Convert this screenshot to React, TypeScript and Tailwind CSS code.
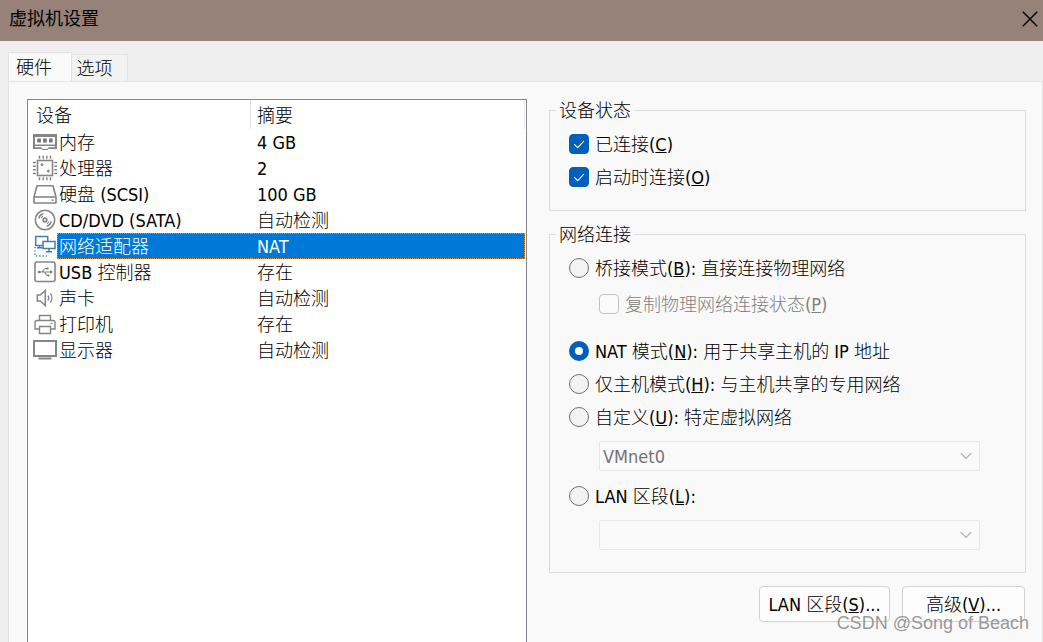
import type { ReactNode } from 'react';

const MemoryIcon = () => (
  <>
    <path d="M1 6h22v13h-7l-1.500 2h-5L8 19H1z" fill="#858585" stroke="none" />
    <path d="M2 8h20v7.500H2zM2 17h20v1.500h-6.500L14 20h-4l-1.500-1.500H2z" fill="white" stroke="none" />
    <path d="M0 5h24v2H0zM0 5h1.800v14.500H0zM22.200 5H24v14.500h-1.800zM0 18.500h8.500v1.500H0zM15.500 18.500H24v1.500h-8.500z" fill="#858585" stroke="none" />
    <path d="M4.200 9.500h3.700v4H4.200zM10.100 9.500h3.700v4h-3.700zM16 9.500h3.700v4H16z" fill="#777" stroke="none" />
  </>
);

const CpuIcon = () => (
  <>
    <rect x="4.500" y="5.500" width="15" height="15" strokeWidth="1.600" />
    <path
      d="M6.500 .8v3M10.200 .8v3M13.800 .8v3M17.500 .8v3M6.500 22.200v3M10.200 22.200v3M13.800 22.200v3M17.500 22.200v3M0 7.500h2.800M0 11.200h2.800M0 14.800h2.800M0 18.500h2.800M21.200 7.500H24M21.200 11.200H24M21.200 14.800H24M21.200 18.500H24"
      strokeWidth="1.500"
    />
    <circle cx="9" cy="9.700" r="1" fill="#858585" />
    <circle cx="15.300" cy="16" r="1" fill="#858585" />
  </>
);

const DiskIcon = () => (
  <>
    <path d="M4 4.800h16l3 11.200v6H1v-6z" strokeWidth="1.600" strokeLinejoin="round" />
    <path d="M1 16h22" strokeWidth="1.600" />
    <path d="M18.500 19.200h2" strokeWidth="1.500" />
  </>
);

const DiscIcon = () => (
  <>
    <circle cx="12" cy="13" r="9.700" strokeWidth="1.600" />
    <circle cx="12" cy="13" r="1.800" strokeWidth="1.700" />
    <path d="M5.800 11.500a6.300 6.300 0 0 1 4.500-4.700M18.200 14.500a6.300 6.300 0 0 1-4.500 4.700" strokeWidth="1.400" />
    <path d="M8.300 11a4.200 4.200 0 0 1 1.700-1.700M15.700 15a4.200 4.200 0 0 1-1.700 1.700" strokeWidth="1.100" />
  </>
);

const NetworkIcon = () => (
  <g stroke="#3f7fae">
    <path d="M10 12.500H2.700v-9h12V8M6.500 12.500v2M4 14.700h5" strokeWidth="1.500" />
    <path d="M10 8.500h12v7H10zM16 15.500v3M13 18.700h6" strokeWidth="1.500" />
    <path d="M2 14v9h12" strokeWidth="1.300" strokeDasharray="1.300 2" />
  </g>
);

const UsbIcon = () => (
  <>
    <rect x="2" y="3" width="20" height="19.500" rx="2" strokeWidth="1.600" />
    <path d="M6 13h12M8.500 13c2 0 2-3.500 4-3.500h2M11 13c1.500 0 1.500 3.500 3.500 3.500h1" strokeWidth="1.100" />
    <circle cx="6.200" cy="13" r="1.300" fill="#777" stroke="none" />
    <path d="M17 11.200l3 1.800-3 1.800z" fill="#777" stroke="none" />
    <rect x="13.500" y="8.500" width="2" height="2" fill="#777" stroke="none" />
    <circle cx="15.500" cy="16.500" r="1.100" fill="#777" stroke="none" />
  </>
);

const SpeakerIcon = () => (
  <>
    <path d="M4.300 10h3l5-4.500v15l-5-4.500h-3z" strokeWidth="1.500" />
    <path d="M14.800 10.500a4 4 0 0 1 0 5M17.300 8.500a7 7 0 0 1 0 9" strokeWidth="1.300" />
  </>
);

const PrinterIcon = () => (
  <>
    <path d="M6.500 9.500v-5h11v5M6 18H2v-6.500q0-2 2-2h16q2 0 2 2V18h-4" strokeWidth="1.400" />
    <path d="M6.500 15.500h11v7h-11z" strokeWidth="1.400" />
    <path d="M17.500 12.500h2" strokeWidth="1.300" />
  </>
);

const DisplayIcon = () => (
  <>
    <rect x="1" y="4" width="22" height="15" strokeWidth="2" />
    <path d="M5.500 21.500h13" strokeWidth="2" />
  </>
);

const devices: { name: string; summary: string; icon: ReactNode; selected?: boolean }[] = [
  { name: '内存', summary: '4 GB', icon: <MemoryIcon /> },
  { name: '处理器', summary: '2', icon: <CpuIcon /> },
  { name: '硬盘 (SCSI)', summary: '100 GB', icon: <DiskIcon /> },
  { name: 'CD/DVD (SATA)', summary: '自动检测', icon: <DiscIcon /> },
  { name: '网络适配器', summary: 'NAT', icon: <NetworkIcon />, selected: true },
  { name: 'USB 控制器', summary: '存在', icon: <UsbIcon /> },
  { name: '声卡', summary: '自动检测', icon: <SpeakerIcon /> },
  { name: '打印机', summary: '存在', icon: <PrinterIcon /> },
  { name: '显示器', summary: '自动检测', icon: <DisplayIcon /> },
];

function DeviceTable() {
  return (
    <table className="w-full table-fixed border-separate border-spacing-0 text-left">
      <colgroup>
        <col className="w-[29px]" />
        <col className="w-[194px]" />
        <col />
      </colgroup>
      <thead>
        <tr className="h-[29px]">
          <th colSpan={2} className="border-r border-[#e5e5e5] p-0 pt-0.5 pl-2 font-light">设备</th>
          <th className="border-r border-[#e5e5e5] p-0 pt-0.5 pl-1.5 font-light">摘要</th>
        </tr>
      </thead>
      <tbody>
        {devices.map((d) => (
          <tr key={d.name} className="h-[26px]">
            <td className="p-0 pl-[5px]">
              <svg viewBox="0 0 24 26" className="block h-[26px] w-6" fill="none" stroke="#858585" aria-hidden="true">
                {d.icon}
              </svg>
            </td>
            <td
              className={
                d.selected
                  ? 'border-y border-l border-dotted border-[#e58a2c] bg-[#0078d7] p-0 pt-px pl-px leading-[22px] text-white'
                  : 'p-0 pt-0.5 pl-0.5'
              }
            >
              {d.name}
            </td>
            <td
              className={
                d.selected
                  ? 'border-y border-r border-dotted border-[#e58a2c] bg-[#0078d7] p-0 pt-px pl-1.5 leading-[22px] text-white'
                  : 'p-0 pt-0.5 pl-1.5'
              }
            >
              {d.summary}
            </td>
          </tr>
        ))}
      </tbody>
    </table>
  );
}

function Check({ children, checked, disabled }: { children: ReactNode; checked?: boolean; disabled?: boolean }) {
  return (
    <label className={disabled ? 'flex h-[33px] items-center gap-1.5 text-[#808080]' : 'flex h-[33px] items-center gap-1.5'}>
      <span className="grid shrink-0 place-items-center">
        <input
          type="checkbox"
          defaultChecked={checked}
          disabled={disabled}
          className="peer col-start-1 row-start-1 size-5 appearance-none rounded border border-[#868686] bg-[#f5f5f5] checked:border-[#005fb8] checked:bg-[#005fb8] disabled:border-[#c3c3c3] disabled:bg-[#fbfbfb]"
        />
        <svg
          viewBox="0 0 20 20"
          className="pointer-events-none invisible col-start-1 row-start-1 size-5 peer-checked:visible"
          fill="none"
          stroke="white"
          strokeWidth="1.1"
          aria-hidden="true"
        >
          <path d="M5.200 10.200l3.500 3.400 6.200-6.400" />
        </svg>
      </span>
      <span className="pt-0.5">{children}</span>
    </label>
  );
}

function Radio({ children, checked }: { children: ReactNode; checked?: boolean }) {
  return (
    <label className="flex h-[33px] items-center gap-1.5">
      <input
        type="radio"
        name="connection"
        defaultChecked={checked}
        className="size-5 shrink-0 appearance-none rounded-full border border-[#707070] bg-[#f3f3f3] checked:border-6 checked:border-[#005fb8] checked:bg-white"
      />
      <span className="pt-0.5">{children}</span>
    </label>
  );
}

function Combo({ label, value }: { label: string; value: string }) {
  return (
    <div className="mr-[45px] ml-[30px] grid items-center">
      <select
        aria-label={label}
        disabled
        defaultValue={value}
        className="col-start-1 row-start-1 h-[30px] w-full appearance-none rounded-xs border border-[#e8e8e8] bg-[#fafafa] px-[3px] pt-0.5 text-[#737373] opacity-100"
      >
        <option value={value}>{value}</option>
      </select>
      <svg
        viewBox="0 0 12 8"
        className="pointer-events-none col-start-1 row-start-1 mr-2 h-2 w-3 justify-self-end"
        fill="none"
        stroke="#adadad"
        strokeWidth="1.2"
        aria-hidden="true"
      >
        <path d="M.7 1.200L6 6.500l5.300-5.300" />
      </svg>
    </div>
  );
}

function Group({ title, children, className }: { title: string; children: ReactNode; className: string }) {
  return (
    <fieldset className={className}>
      <legend className="-ml-[13px] h-[22px] px-[3px]">{title}</legend>
      {children}
    </fieldset>
  );
}

const buttonClass = 'h-9 rounded border border-[#d0d0d0] bg-[#fdfdfd] pt-0.5 font-light whitespace-nowrap';

export default function App() {
  return (
    <div className="relative flex min-h-screen flex-col bg-[#efefef] font-['DejaVu_Sans_Condensed','DejaVu_Sans','Noto_Sans_CJK_SC',sans-serif] text-lg leading-6 font-light text-black">
      <header className="flex h-[41px] items-center justify-between bg-[#968279] pr-[5px] pl-[9px] font-['Noto_Sans_CJK_SC',sans-serif]">
        <h1 className="pb-2 font-normal">虚拟机设置</h1>
        <button type="button" aria-label="关闭" className="pb-1">
          <svg viewBox="0 0 16 16" className="block size-4" fill="none" stroke="black" strokeWidth="1.4" aria-hidden="true">
            <path d="M.8.8l14.400 14.400M15.200.8L.8 15.200" />
          </svg>
        </button>
      </header>

      <div role="tablist" className="mt-[11px] flex items-end pl-2">
        <button
          type="button"
          role="tab"
          aria-selected="true"
          className="-mb-px h-[30px] w-16 border border-b-0 border-[#e3e3e3] bg-[#f9f9f9] pr-3 font-light"
        >
          硬件
        </button>
        <button
          type="button"
          role="tab"
          aria-selected="false"
          className="h-[27px] w-14 border border-b-0 border-l-0 border-[#e3e3e3] bg-[#f2f2f2] pt-0.5 pr-2.5 font-light"
        >
          选项
        </button>
      </div>

      <main className="ml-2 flex flex-1 gap-[22px] border border-b-0 border-[#e3e3e3] bg-[#f9f9f9] pt-[17px] pr-4 pl-[18px]">
        <section className="w-[500px] shrink-0 border border-b-0 border-[#828790] bg-white pr-px">
          <DeviceTable />
        </section>

        <section className="min-w-0 flex-1">
          <Group title="设备状态" className="border border-[#dcdcdc] pt-1.5 pb-[17px] pl-[19px]">
            <Check checked>
              已连接(<u>C</u>)
            </Check>
            <Check checked>
              启动时连接(<u>O</u>)
            </Check>
          </Group>

          <Group title="网络连接" className="mt-3 border border-[#dcdcdc] pt-1.5 pb-[22px] pl-[19px]">
            <Radio>
              桥接模式(<u>B</u>): 直接连接物理网络
            </Radio>
            <div className="mt-[3px] ml-[30px]">
              <Check disabled>
                复制物理网络连接状态(<u>P</u>)
              </Check>
            </div>
            <div className="mt-3.5">
              <Radio checked>
                NAT 模式(<u>N</u>): 用于共享主机的 IP 地址
              </Radio>
              <Radio>
                仅主机模式(<u>H</u>): 与主机共享的专用网络
              </Radio>
              <Radio>
                自定义(<u>U</u>): 特定虚拟网络
              </Radio>
            </div>
            <div className="mt-2">
              <Combo label="特定虚拟网络" value="VMnet0" />
            </div>
            <div className="mt-2">
              <Radio>
                LAN 区段(<u>L</u>):
              </Radio>
            </div>
            <div className="mt-2">
              <Combo label="LAN 区段" value="" />
            </div>
          </Group>

          <div className="mt-[13px] flex justify-end gap-3 pr-px">
            <button type="button" className={`${buttonClass} w-[131px]`}>
              LAN 区段(<u>S</u>)...
            </button>
            <button type="button" className={`${buttonClass} w-[123px]`}>
              高级(<u>V</u>)...
            </button>
          </div>
        </section>
      </main>

      <p className="pointer-events-none absolute right-3.5 bottom-[7px] font-['Liberation_Sans',sans-serif] text-lg leading-6 font-normal text-[#8c8c8c]/90">
        CSDN @Song of Beach
      </p>
    </div>
  );
}
